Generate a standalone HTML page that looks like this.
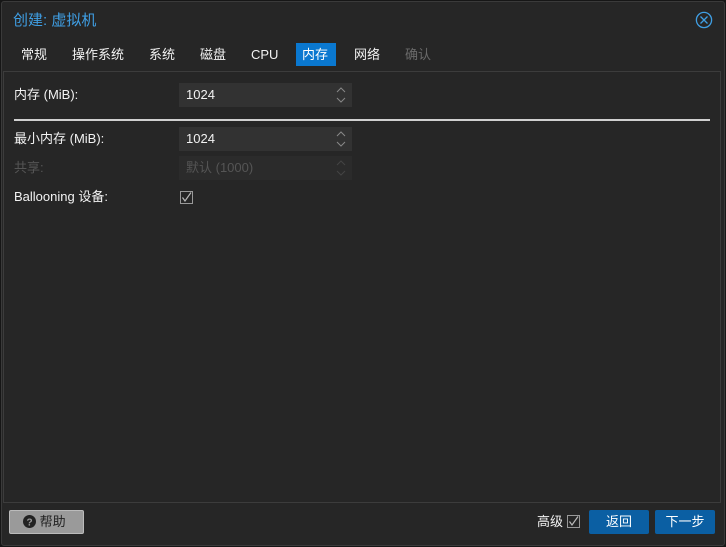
<!DOCTYPE html>
<html><head><meta charset="utf-8"><style>
*{box-sizing:border-box;margin:0;padding:0}
body{width:726px;height:547px;background:#161616;font-family:"Liberation Sans","Noto Sans CJK SC",sans-serif;font-size:13px;color:#f2f2f2;position:relative;overflow:hidden}
.win{position:absolute;left:1px;top:1px;width:724px;height:545px;background:#262626;border:1px solid #3a3a3a;border-radius:3px}
.title{position:absolute;left:11px;top:10px;font-size:15px;line-height:18px;color:#3f9ee3}
.tab{position:absolute;top:43px;height:23px;line-height:23px;padding:0 6px;font-size:13px}
.tab.a{background:#0a78d0;color:#fff}
.tab.d{color:#6a6a6a}
.panel{position:absolute;left:3px;top:71px;width:718px;height:432px;border:1px solid #3c3c3c;background:#262626}
.lbl{position:absolute;left:14px;font-size:13px;line-height:16px}
.fld{position:absolute;left:179px;width:173px;height:24px;background:#323232;padding-left:7px;line-height:24px}
.fld.d{background:#2b2b2b;color:#555}
.fld svg{position:absolute;right:6px;top:3px}
.sep{position:absolute;left:14px;top:119px;width:696px;height:2px;background:#d0d0d0}
.cb{position:absolute}
.btn{position:absolute;top:510px;height:24px;line-height:24px;text-align:center;border-radius:2px;font-size:13px}
</style></head><body>
<div class="win">
<div class="title">创建: 虚拟机</div>
<svg style="position:absolute;left:693px;top:9px" width="18" height="18"><circle cx="9" cy="9" r="7.6" stroke="#3f9ee3" stroke-width="1.3" fill="none"/><path d="M5.5 5.5L12.5 12.5M12.5 5.5L5.5 12.5" stroke="#3f9ee3" stroke-width="1.3"/></svg>
</div>
<div class="tab" style="left:15px">常规</div>
<div class="tab" style="left:66px">操作系统</div>
<div class="tab" style="left:143px">系统</div>
<div class="tab" style="left:194px">磁盘</div>
<div class="tab" style="left:245px">CPU</div>
<div class="tab a" style="left:296px;width:40px">内存</div>
<div class="tab" style="left:348px">网络</div>
<div class="tab d" style="left:399px">确认</div>
<div class="panel"></div>
<div class="lbl" style="top:87px">内存 (MiB):</div>
<div class="fld" style="top:83px">1024<svg width="10" height="18"><path d="M1 6L5 2L9 6M1 12L5 16L9 12" stroke="#888" fill="none"/></svg></div>
<div class="sep"></div>
<div class="lbl" style="top:131px">最小内存 (MiB):</div>
<div class="fld" style="top:127px">1024<svg width="10" height="18"><path d="M1 6L5 2L9 6M1 12L5 16L9 12" stroke="#888" fill="none"/></svg></div>
<div class="lbl" style="top:160px;color:#555">共享:</div>
<div class="fld d" style="top:156px">默认 (1000)<svg width="10" height="18"><path d="M1 6L5 2L9 6M1 12L5 16L9 12" stroke="#444" fill="none"/></svg></div>
<div class="lbl" style="top:189px">Ballooning 设备:</div>
<svg class="cb" style="left:180px;top:191px" width="13" height="13"><rect x="0.5" y="0.5" width="12" height="12" stroke="#999" fill="none"/><path d="M2.5 6.5L5 10L11 1.5" stroke="#bbb" stroke-width="1.2" fill="none"/></svg>
<div class="btn" style="left:9px;width:75px;background:#9a9a9a;border:1px solid #bbb;color:#222;text-align:left;padding-left:13px;line-height:22px"><svg width="13" height="13" style="vertical-align:-2px"><circle cx="6.5" cy="6.5" r="6.5" fill="#222"/><text x="6.5" y="10.5" font-size="10" font-weight="bold" text-anchor="middle" fill="#9a9a9a" font-family="Liberation Sans">?</text></svg> 帮助</div>
<div style="position:absolute;left:537px;top:514px;line-height:16px">高级</div>
<svg class="cb" style="left:567px;top:515px" width="13" height="13"><rect x="0.5" y="0.5" width="12" height="12" stroke="#999" fill="none"/><path d="M2.5 6.5L5 10L11 1.5" stroke="#bbb" stroke-width="1.2" fill="none"/></svg>
<div class="btn" style="left:589px;width:60px;background:#0b5fa3;color:#fff">返回</div>
<div class="btn" style="left:655px;width:60px;background:#0b5fa3;color:#fff">下一步</div>
</body></html>
